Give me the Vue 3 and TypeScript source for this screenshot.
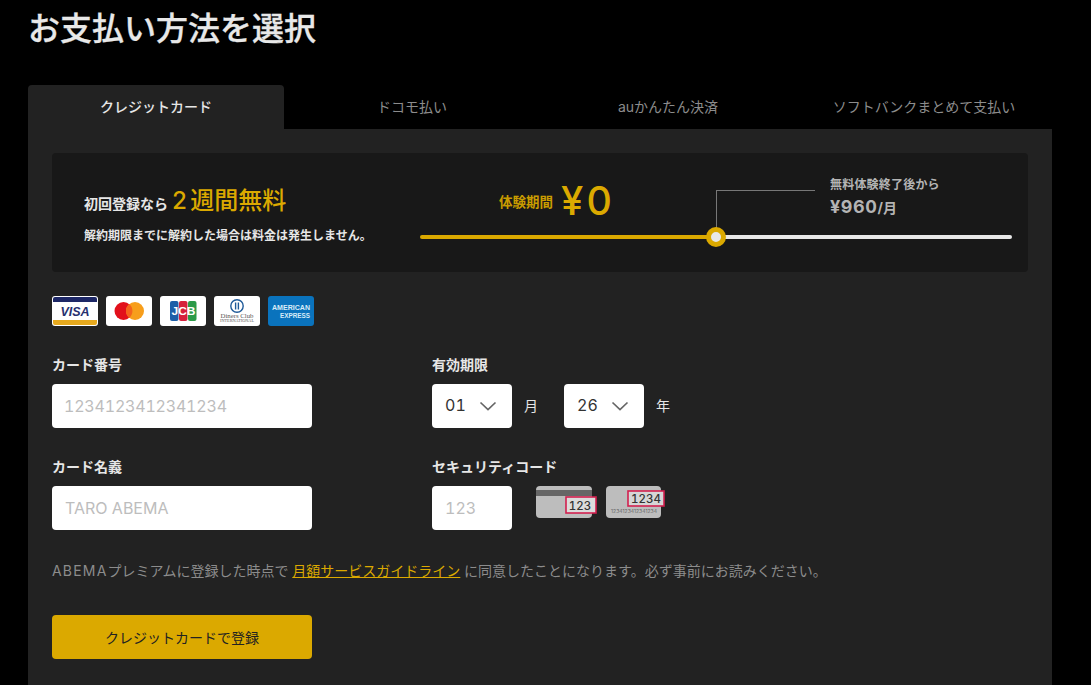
<script setup lang="ts">
import { ref } from 'vue';

const tabs = ['クレジットカード', 'ドコモ払い', 'auかんたん決済', 'ソフトバンクまとめて支払い'];
const activeTab = ref<number>(0);
const cardNumber = ref<string>('');
const cardName = ref<string>('');
const securityCode = ref<string>('');
</script>

<template>
  <div class="page">
    <h1 class="title">お支払い方法を選択</h1>

    <div class="tabs">
      <button
        v-for="(tab, i) in tabs"
        :key="tab"
        class="tab"
        :class="{ active: activeTab === i }"
        @click="activeTab = i"
      >{{ tab }}</button>
    </div>

    <div class="panel">
      <div class="banner">
        <div class="banner-left">
          <p class="lead">初回登録なら <span class="lead-big"><span class="lead-num">2</span>週間無料</span></p>
          <p class="note">解約期限までに解約した場合は料金は発生しません。</p>
        </div>
        <div class="plan">
          <div class="plan-top">
            <div class="trial">
              <span class="trial-label">体験期間</span>
              <span class="trial-price">¥0</span>
            </div>
            <div class="after">
              <span class="after-label">無料体験終了後から</span>
              <span class="after-price">¥960<small>/月</small></span>
            </div>
          </div>
          <div class="bar">
            <div class="bar-on"></div>
            <div class="bar-off"></div>
            <span class="elbow"></span>
            <span class="knob"></span>
          </div>
        </div>
      </div>

      <div class="brands">
        <svg class="brand" viewBox="0 0 46 30">
          <rect width="46" height="30" rx="3" fill="#fff" />
          <path d="M3 1h40a2 2 0 0 1 2 2v3H1V3a2 2 0 0 1 2-2z" fill="#1d2766" />
          <path d="M1 24h44v3a2 2 0 0 1-2 2H3a2 2 0 0 1-2-2z" fill="#e6a91e" />
          <text x="23" y="19.5" text-anchor="middle" class="visa">VISA</text>
        </svg>
        <svg class="brand" viewBox="0 0 46 30">
          <rect width="46" height="30" rx="3" fill="#fff" />
          <circle cx="17.5" cy="15" r="9" fill="#e2101b" />
          <circle cx="29" cy="15" r="9" fill="#f79e1b" />
          <path d="M23.2 8.1a9 9 0 0 1 0 13.8 9 9 0 0 1 0-13.8z" fill="#f4641c" />
        </svg>
        <svg class="brand" viewBox="0 0 46 30">
          <rect width="46" height="30" rx="3" fill="#fff" />
          <rect x="10" y="5" width="8.5" height="20" rx="2" fill="#1d5fa8" />
          <rect x="19" y="5" width="8.5" height="20" rx="2" fill="#d6213c" />
          <rect x="28" y="5" width="8.5" height="20" rx="2" fill="#2b9a48" />
          <text x="23.5" y="19" text-anchor="middle" textLength="24" lengthAdjust="spacingAndGlyphs" class="jcb">JCB</text>
        </svg>
        <svg class="brand" viewBox="0 0 46 30">
          <rect width="46" height="30" rx="3" fill="#fff" />
          <circle cx="23" cy="10" r="6.2" fill="none" stroke="#1f5a99" stroke-width="1.4" />
          <path d="M21.6 6.6v6.8M24.4 6.6v6.8" stroke="#1f5a99" stroke-width="1.4" />
          <text x="23" y="22" text-anchor="middle" textLength="33" lengthAdjust="spacingAndGlyphs" class="diners">Diners Club</text>
          <text x="23" y="26" text-anchor="middle" textLength="34" lengthAdjust="spacingAndGlyphs" class="diners-sub">INTERNATIONAL</text>
        </svg>
        <svg class="brand" viewBox="0 0 46 30">
          <rect width="46" height="30" rx="3" fill="#0a73bd" />
          <text x="4" y="13.5" textLength="38" lengthAdjust="spacingAndGlyphs" class="amex">AMERICAN</text>
          <text x="12" y="21.5" textLength="30" lengthAdjust="spacingAndGlyphs" class="amex">EXPRESS</text>
        </svg>
      </div>

      <div class="form">
        <div class="field">
          <label class="label">カード番号</label>
          <input v-model="cardNumber" class="input wide number" placeholder="1234123412341234" />
        </div>
        <div class="field">
          <label class="label">有効期限</label>
          <div class="row">
            <div class="select">
              <span>01</span>
              <svg width="18" height="10" viewBox="0 0 18 10"><path d="M1.5 1.5 9 8.5l7.5-7" fill="none" stroke="#666" stroke-width="1.7" /></svg>
            </div>
            <span class="unit">月</span>
            <div class="select">
              <span>26</span>
              <svg width="18" height="10" viewBox="0 0 18 10"><path d="M1.5 1.5 9 8.5l7.5-7" fill="none" stroke="#666" stroke-width="1.7" /></svg>
            </div>
            <span class="unit">年</span>
          </div>
        </div>
        <div class="field">
          <label class="label">カード名義</label>
          <input v-model="cardName" class="input wide" placeholder="TARO ABEMA" />
        </div>
        <div class="field">
          <label class="label">セキュリティコード</label>
          <div class="row code-row">
            <input v-model="securityCode" class="input short" placeholder="123" />
            <svg class="code-card first" width="62" height="34" viewBox="0 0 62 34">
              <rect width="56" height="32" rx="4" fill="#bdbdbd" />
              <rect y="4" width="56" height="6" fill="#666" />
              <rect x="30" y="11" width="30" height="16" fill="#dcdcdc" />
              <text x="44" y="23.5" text-anchor="middle" class="code-num">123</text>
              <rect x="30" y="11" width="30" height="16" fill="none" stroke="#d3204f" stroke-width="1.6" />
            </svg>
            <svg class="code-card" width="60" height="34" viewBox="0 0 60 34">
              <rect width="55" height="32" rx="4" fill="#bdbdbd" />
              <rect x="22" y="5" width="36" height="15" fill="#d6d6d6" />
              <text x="40" y="16.5" text-anchor="middle" class="code-num">1234</text>
              <rect x="22" y="5" width="36" height="15" fill="none" stroke="#d3204f" stroke-width="1.6" />
              <text x="28" y="26.5" text-anchor="middle" textLength="46" lengthAdjust="spacingAndGlyphs" class="code-tiny">1234123412341234</text>
            </svg>
          </div>
        </div>
      </div>

      <p class="agree">
        <span class="brand-name">ABEMA</span>プレミアムに登録した時点で <a class="guide" href="#">月額サービスガイドライン</a> に同意したことになります。必ず事前にお読みください。
      </p>

      <button class="submit">クレジットカードで登録</button>
    </div>
  </div>
</template>

<style>
html, body {
  margin: 0;
  background: #000;
  overflow: hidden;
}
</style>

<style scoped>
.page {
  width: 1024px;
  height: 685px;
  margin-left: 28px;
  overflow: hidden;
  font-family: Inter, "Noto Sans CJK JP", sans-serif;
  font-variant-numeric: tabular-nums;
  color: #e6e6e6;
}

.title {
  margin: 0;
  height: 85px;
  padding-top: 7px;
  box-sizing: border-box;
  font-size: 32px;
  line-height: 44px;
  font-weight: 500;
  -webkit-text-stroke: 0.3px #e8e8e8;
  color: #e8e8e8;
}

.tabs {
  display: grid;
  grid-template-columns: repeat(4, 256px);
  height: 44px;
}

.tab {
  border: none;
  background: transparent;
  color: #8c8c8c;
  font: inherit;
  font-size: 14px;
  padding: 0 0 3px;
  border-radius: 4px 4px 0 0;
}

.tab.active {
  background: #222;
  color: #e6e6e6;
  font-weight: 500;
}

.panel {
  background: #222;
  padding: 24px;
  height: 560px;
  box-sizing: border-box;
}

.banner {
  display: flex;
  height: 119px;
  background: #181818;
  border-radius: 4px;
}

.banner-left {
  width: 368px;
  padding: 33px 0 0 32px;
  box-sizing: border-box;
}

.lead {
  margin: 0;
  font-size: 14px;
  line-height: 30px;
  font-weight: 700;
}

.lead-big {
  font-size: 24px;
  color: #dba900;
  font-weight: 500;
}

.lead-num {
  margin-right: 3px;
}

.note {
  margin: 8px 0 0;
  font-size: 12px;
  line-height: 18px;
  font-weight: 700;
  white-space: nowrap;
}

.plan {
  width: 592px;
  padding-top: 24px;
  box-sizing: border-box;
}

.plan-top {
  display: flex;
  height: 49px;
}

.trial {
  width: 410px;
  display: flex;
  align-items: center;
  padding-left: 79px;
  padding-bottom: 2px;
  box-sizing: border-box;
  gap: 8px;
}

.trial-label {
  font-size: 13.5px;
  font-weight: 700;
  color: #c99c00;
}

.trial-price {
  font-size: 40px;
  line-height: 44px;
  letter-spacing: 3px;
  color: #dba900;
  font-weight: 500;
}

.after {
  display: flex;
  flex-direction: column;
  gap: 3px;
  color: #b4b4b4;
}

.after-label {
  font-size: 12px;
  line-height: 16px;
  font-weight: 700;
  letter-spacing: 0.2px;
}

.after-price {
  font-size: 18px;
  line-height: 22px;
  font-weight: 700;
  letter-spacing: 0.6px;
}

.after-price small {
  font-size: 14px;
  letter-spacing: 0;
}

.bar {
  position: relative;
  display: flex;
  margin-top: 9px;
  height: 4px;
}

.bar-on {
  width: 296px;
  background: #dba900;
  border-radius: 2px 0 0 2px;
}

.bar-off {
  flex: 1;
  background: #e8e8e8;
  border-radius: 0 2px 2px 0;
}

.elbow {
  position: absolute;
  left: 296px;
  bottom: 9px;
  width: 99px;
  height: 40px;
  border-left: 1px solid #777;
  border-top: 1px solid #777;
  box-sizing: border-box;
}

.knob {
  position: absolute;
  left: 286px;
  top: -8px;
  width: 20px;
  height: 20px;
  box-sizing: border-box;
  border: 5px solid #dba900;
  border-radius: 50%;
  background: #e8e8e8;
}

.brands {
  display: flex;
  gap: 8px;
  margin-top: 24px;
}

.brand {
  width: 46px;
  height: 30px;
  display: block;
}

.visa {
  font: italic 700 12.5px "Liberation Sans", sans-serif;
  fill: #27306f;
}

.jcb {
  font: 700 11px "Liberation Sans", sans-serif;
  fill: #fff;
}

.diners {
  font: 6.2px "Liberation Serif", serif;
  fill: #555;
}

.diners-sub {
  font: 3.4px "Liberation Serif", serif;
  fill: #555;
}

.amex {
  font: 700 7px "Liberation Sans", sans-serif;
  fill: #d8ecf8;
}

.form {
  display: grid;
  grid-template-columns: 380px 1fr;
  row-gap: 29px;
  margin-top: 29px;
}

.field {
  display: flex;
  flex-direction: column;
  align-items: flex-start;
}

.label {
  height: 29px;
  font-size: 14px;
  line-height: 20px;
  font-weight: 700;
  color: #e6e6e6;
}

.row {
  display: flex;
  align-items: center;
}

.input {
  height: 44px;
  box-sizing: border-box;
  border: none;
  outline: none;
  border-radius: 4px;
  background: #fff;
  padding: 0 12px 1px 13px;
  font: inherit;
  font-size: 16px;
  font-variant-numeric: tabular-nums;
  color: #222;
}

.input::placeholder {
  color: #bdbdbd;
}

.number {
  padding-left: 12px;
  letter-spacing: -0.2px;
}

.wide {
  width: 260px;
}

.short {
  width: 80px;
}

.select {
  display: flex;
  align-items: center;
  justify-content: space-between;
  width: 80px;
  height: 44px;
  box-sizing: border-box;
  padding: 0 15px 2px 13px;
  background: #fff;
  border-radius: 4px;
  font-size: 16px;
  color: #333;
}

.select svg {
  margin-top: 2px;
}

.unit {
  width: 52px;
  padding: 0 0 2px 12px;
  box-sizing: border-box;
  font-size: 14px;
}

.code-row {
  align-items: flex-start;
}

.code-card {
  display: block;
  flex: none;
}

.code-card.first {
  margin-left: 24px;
  margin-right: 8px;
}

.code-num {
  font: 500 11.5px Inter, sans-serif;
  font-variant-numeric: tabular-nums;
  fill: #333;
}

.code-tiny {
  font: 4.6px Inter, sans-serif;
  fill: #666;
}

.agree {
  margin: 31px 0 0;
  font-size: 14px;
  line-height: 20px;
  color: #8c8c8c;
  white-space: nowrap;
}

.brand-name {
  letter-spacing: 1.2px;
}

.guide {
  color: #dba900;
}

.submit {
  display: block;
  width: 260px;
  height: 44px;
  margin-top: 34px;
  border: none;
  border-radius: 4px;
  background: #dba900;
  font: inherit;
  font-size: 14px;
  color: #222;
}
</style>
